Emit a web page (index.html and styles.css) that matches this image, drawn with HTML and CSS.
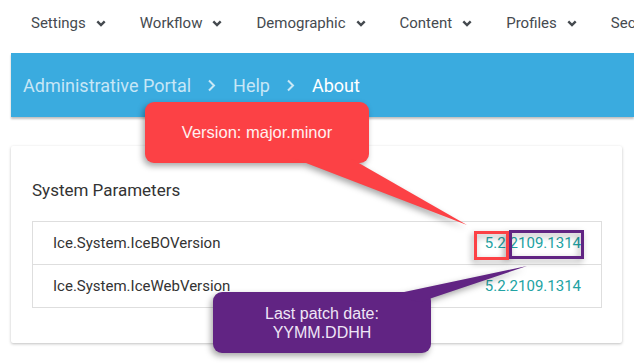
FILE: index.html
```html
<!DOCTYPE html>
<html>
  <head>
    <meta name="viewport" content="width=device-width, initial-scale=1.0" />
    <title>About - Administrative Portal</title>
    <link rel="stylesheet" href="styles.css">
  </head>
  <body>
    <div class="topnav">
      <a class="nav-item">Settings <svg class="caret" viewBox="0 0 10 7"><path d="M1.3 1.3 L5 5 L8.7 1.3" /></svg></a>
      <a class="nav-item">Workflow <svg class="caret" viewBox="0 0 10 7"><path d="M1.3 1.3 L5 5 L8.7 1.3" /></svg></a>
      <a class="nav-item">Demographic <svg class="caret" viewBox="0 0 10 7"><path d="M1.3 1.3 L5 5 L8.7 1.3" /></svg></a>
      <a class="nav-item">Content <svg class="caret" viewBox="0 0 10 7"><path d="M1.3 1.3 L5 5 L8.7 1.3" /></svg></a>
      <a class="nav-item">Profiles <svg class="caret" viewBox="0 0 10 7"><path d="M1.3 1.3 L5 5 L8.7 1.3" /></svg></a>
      <a class="nav-item">Security <svg class="caret" viewBox="0 0 10 7"><path d="M1.3 1.3 L5 5 L8.7 1.3" /></svg></a>
    </div>

    <div class="page">
      <div class="crumbs">
        <span class="crumb">Administrative Portal</span>
        <svg class="sep" viewBox="0 0 9 13"><path d="M2 1.5 L7 6.5 L2 11.5" /></svg>
        <span class="crumb">Help</span>
        <svg class="sep" viewBox="0 0 9 13"><path d="M2 1.5 L7 6.5 L2 11.5" /></svg>
        <span class="crumb current">About</span>
      </div>

      <div class="card">
        <h3>System Parameters</h3>
        <table class="params">
          <tr>
            <td>Ice.System.IceBOVersion</td>
            <td class="val">5.2.2109.1314</td>
          </tr>
          <tr>
            <td>Ice.System.IceWebVersion</td>
            <td class="val">5.2.2109.1314</td>
          </tr>
        </table>
      </div>
    </div>

    <!-- annotations drawn over the screenshot -->
    <div class="notes">
      <svg class="notes-art" viewBox="0 0 634 364" width="634" height="364">
        <g class="shade">
          <rect x="475.5" y="232.5" width="32" height="26" fill="none" stroke="#fc4145" stroke-width="3" />
          <rect x="510.5" y="231.5" width="72" height="26" fill="none" stroke="#612483" stroke-width="3" />
        </g>
        <g class="shade">
          <rect x="145" y="102" width="224" height="61" rx="9" fill="#fc4145" />
          <polygon points="293,158 350,158 467,225" fill="#fc4145" />
        </g>
        <g class="shade">
          <rect x="213" y="292" width="218" height="61" rx="9" fill="#612483" />
          <polygon points="390,295 527,266 420,302" fill="#612483" />
        </g>
      </svg>
      <div class="note note-red">Version: major.minor</div>
      <div class="note note-purple">Last patch date:<br>YYMM.DDHH</div>
    </div>
  </body>
</html>
```

FILE: styles.css
```css
body {
  margin: 0;
  font-family: Roboto, "Liberation Sans", Arial, sans-serif;
  background-color: #fff;
  color: #333;
  overflow: hidden;
  position: relative;
  height: 364px;
}

.topnav {
  height: 45px;
  display: flex;
  align-items: center;
  gap: 34px;
  padding-left: 31px;
  white-space: nowrap;
  overflow: hidden;
}

.nav-item {
  display: flex;
  align-items: center;
  font-size: 15px;
  color: #454a4f;
  flex-shrink: 0;
}

.caret {
  width: 10px;
  height: 7px;
  margin-left: 10px;
  margin-top: 1px;
  fill: none;
  stroke: #454a4f;
  stroke-width: 2.4;
}

.page {
  padding: 8px 0 0 11px;
}

.crumbs {
  height: 64px;
  background: #3aabdf;
  display: flex;
  align-items: center;
  padding-left: 12px;
  box-shadow: 0 2px 2px rgba(0, 0, 0, 0.25);
  font-size: 18px;
}

.crumb {
  color: rgba(255, 255, 255, 0.72);
}

.crumb.current {
  color: #fff;
}

.sep {
  width: 9px;
  height: 13px;
  margin: 0 17px 0 16px;
  fill: none;
  stroke: rgba(255, 255, 255, 0.72);
  stroke-width: 2;
}

.card {
  width: 611px;
  box-sizing: border-box;
  margin-top: 29px;
  padding: 32px 20px 35px 21px;
  background: #fff;
  border-radius: 2px;
  box-shadow: 0 1px 3px rgba(0, 0, 0, 0.25);
}

.card h3 {
  margin: 0 0 19px;
  font-size: 17px;
  font-weight: 400;
  line-height: 24px;
  color: #333;
}

.params {
  width: 100%;
  border-collapse: collapse;
}

.params td {
  border-top: 1px solid #dedede;
  border-bottom: 1px solid #dedede;
  height: 42px;
  padding: 0 20px;
  font-size: 15px;
  color: #333;
}

.params td:first-child {
  border-left: 1px solid #dedede;
}

.params td:last-child {
  border-right: 1px solid #dedede;
}

.params .val {
  text-align: right;
  font-size: 15px;
  color: #22a3a3;
}

.notes {
  position: absolute;
  left: 0;
  top: 0;
  width: 634px;
  height: 364px;
  pointer-events: none;
}

.notes-art {
  position: absolute;
  left: 0;
  top: 0;
}

.shade {
  filter: drop-shadow(-2px 3px 3px rgba(0, 0, 0, 0.35));
}

.note {
  position: absolute;
  display: flex;
  align-items: center;
  justify-content: center;
  text-align: center;
  font-family: "Liberation Sans", Arial, sans-serif;
}

.note-red {
  left: 145px;
  top: 102px;
  width: 224px;
  height: 61px;
  font-size: 16.5px;
  color: #fff0f0;
}

.note-purple {
  left: 213px;
  top: 292px;
  width: 218px;
  height: 61px;
  font-size: 16px;
  line-height: 19px;
  color: #efe6f6;
}
```
